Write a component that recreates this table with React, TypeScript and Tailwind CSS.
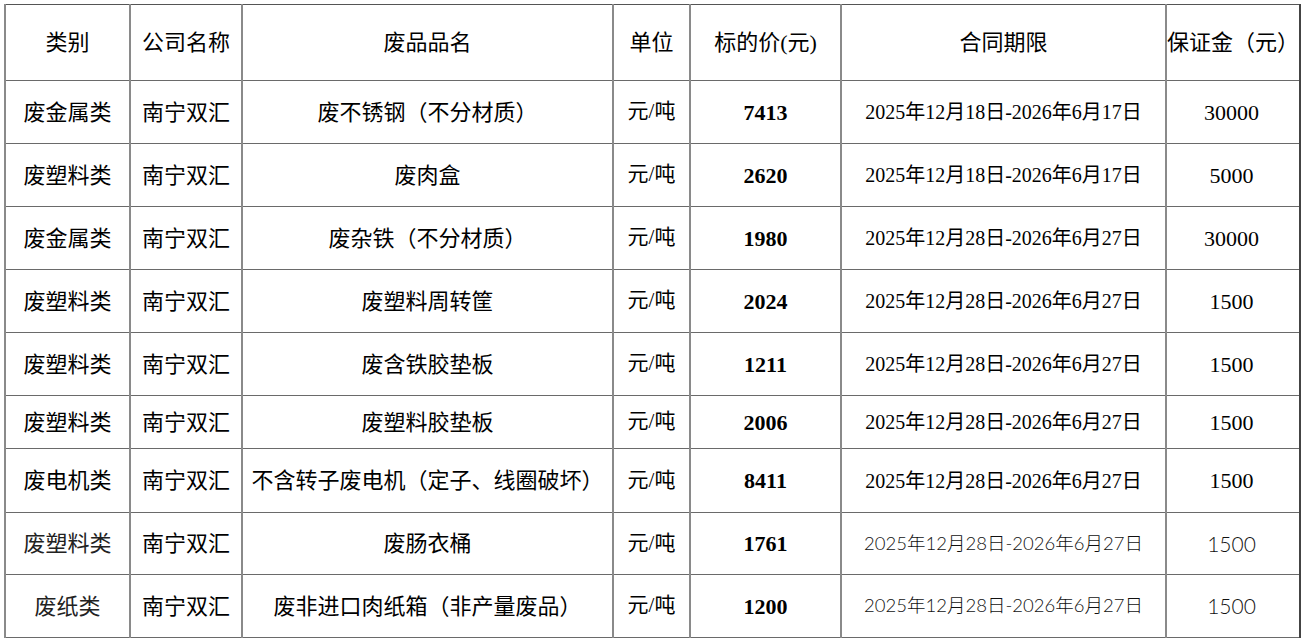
import React from "react";

type Row = {
  cat: string;
  name: string;
  price: string;
  date: string;
  dep: string;
  light?: boolean;
  h: number;
};

const D1 = "2025年12月18日-2026年6月17日";
const D2 = "2025年12月28日-2026年6月27日";

const rows: Row[] = [
  { cat: "废金属类", name: "废不锈钢（不分材质）", price: "7413", date: D1, dep: "30000", h: 63 },
  { cat: "废塑料类", name: "废肉盒", price: "2620", date: D1, dep: "5000", h: 63 },
  { cat: "废金属类", name: "废杂铁（不分材质）", price: "1980", date: D2, dep: "30000", h: 63 },
  { cat: "废塑料类", name: "废塑料周转筐", price: "2024", date: D2, dep: "1500", h: 63 },
  { cat: "废塑料类", name: "废含铁胶垫板", price: "1211", date: D2, dep: "1500", h: 63 },
  { cat: "废塑料类", name: "废塑料胶垫板", price: "2006", date: D2, dep: "1500", h: 53 },
  { cat: "废电机类", name: "不含转子废电机（定子、线圈破坏）", price: "8411", date: D2, dep: "1500", h: 64 },
  { cat: "废塑料类", name: "废肠衣桶", price: "1761", date: D2, dep: "1500", light: true, h: 62 },
  { cat: "废纸类", name: "废非进口肉纸箱（非产量废品）", price: "1200", date: D2, dep: "1500", light: true, h: 63 },
];

const serif = "font-['Liberation_Serif','Noto_Sans_CJK_SC',serif]";
const thin = "font-['Lato','Noto_Sans_CJK_SC',sans-serif] font-light text-[#111]";

const cell =
  "border-r-2 border-r-[#8a8a8a] border-b border-b-[#6a6a6a] text-center align-middle p-0 whitespace-nowrap";

export default function App() {
  return (
    <div className="bg-white w-[1303px] h-[640px] pt-[4px] pl-[4px] text-black">
      <table className={`border-collapse table-fixed border-t border-t-[#555] border-l-2 border-l-[#8a8a8a] ${serif}`}>
        <colgroup>
          <col className="w-[125px]" />
          <col className="w-[112px]" />
          <col className="w-[371px]" />
          <col className="w-[77px]" />
          <col className="w-[151px]" />
          <col className="w-[325px]" />
          <col className="w-[131px]" />
        </colgroup>
        <thead>
          <tr className="h-[76px] text-[22px]">
            <th className={`${cell} font-normal`}>类别</th>
            <th className={`${cell} font-normal`}>公司名称</th>
            <th className={`${cell} font-normal`}>废品品名</th>
            <th className={`${cell} font-normal`}>单位</th>
            <th className={`${cell} font-normal`}>标的价(元)</th>
            <th className={`${cell} font-normal`}>合同期限</th>
            <th className={`${cell} font-normal border-r border-r-[#444] text-left`}>保证金（元）</th>
          </tr>
        </thead>
        <tbody>
          {rows.map((r, i) => (
            <tr key={i} style={{ height: r.h }}>
              <td className={`${cell} text-[22px] ${r.light ? "text-[#222]" : ""}`}>{r.cat}</td>
              <td className={`${cell} text-[22px]`}>南宁双汇</td>
              <td className={`${cell} text-[22px]`}>{r.name}</td>
              <td className={`${cell} text-[21px]`}>元/吨</td>
              <td className={`${cell} text-[22px] font-bold`}>{r.price}</td>
              <td className={`${cell} ${r.light ? `${thin} text-[18.5px]` : "text-[20px]"}`}>{r.date}</td>
              <td className={`${cell} border-r border-r-[#444] pr-[3px] ${r.light ? `${thin} text-[21px]` : "text-[22px]"}`}>{r.dep}</td>
            </tr>
          ))}
        </tbody>
      </table>
    </div>
  );
}
